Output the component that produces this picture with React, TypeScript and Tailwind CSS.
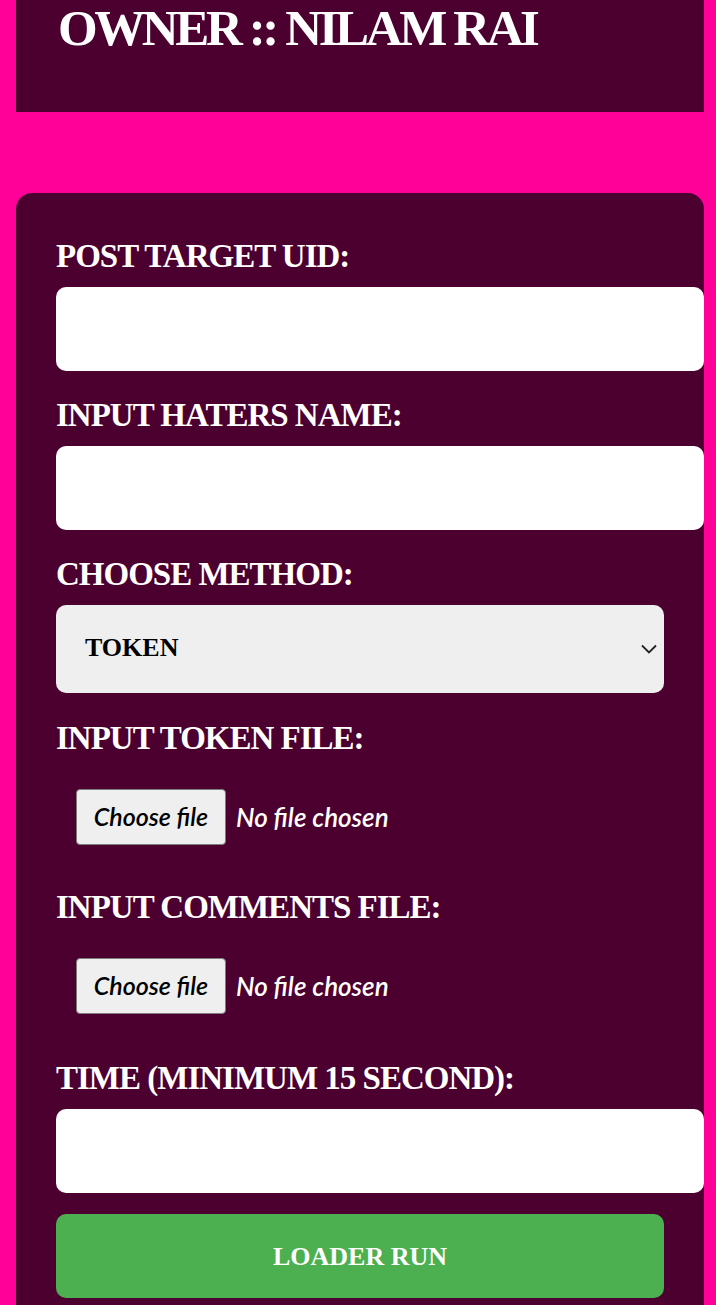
const serif = "font-['Liberation_Serif',serif]";

function Label({ children }: { children: string }) {
	return (
		<label className="mb-[14px] block text-[33px] font-bold leading-[33px] tracking-[-1px] text-white">
			{children}
		</label>
	);
}

function TextField({ last }: { last?: boolean }) {
	return (
		<input
			type="text"
			className={
				last
					? 'mb-[21px] block h-[84px] w-[calc(100%+40px)] rounded-[10px] bg-white px-[20px] text-[24px] text-black outline-none'
					: 'mb-[28px] block h-[84px] w-[calc(100%+40px)] rounded-[10px] bg-white px-[20px] text-[24px] text-black outline-none'
			}
		/>
	);
}

// native file input text says "Choose File", so the control is drawn by hand
function FileField({ spacing }: { spacing: string }) {
	return (
		<label
			className={`${spacing} flex cursor-pointer items-center gap-[10px] p-[20px] font-['Lato',sans-serif] text-[26px] font-semibold italic text-white`}
		>
			<input type="file" className="hidden" />
			<span className="flex h-[56px] w-[150px] items-center justify-center rounded-[4px] border border-[#7d7d7d] bg-[#efefef] text-[25px] text-black">
				Choose file
			</span>
			<span>No file chosen</span>
		</label>
	);
}

export default function App() {
	return (
		<div className={`h-screen overflow-hidden bg-[#ff0099] pl-[16px] pr-[12px] ${serif}`}>
			<div className="h-[112px] bg-[#4b0030] pl-[42px]">
				<h1 className="text-[51px] font-bold leading-[56px] tracking-[-3.4px] text-white">
					OWNER :: NILAM RAI
				</h1>
			</div>

			<form className="mt-[81px] rounded-[16px] bg-[#4b0030] px-[40px] pb-[40px] pt-[47px]">
				<Label>POST TARGET UID:</Label>
				<TextField />

				<Label>INPUT HATERS NAME:</Label>
				<TextField />

				<Label>CHOOSE METHOD:</Label>
				<div className="relative mb-[29px]">
					<select className="block h-[88px] w-full appearance-none rounded-[10px] bg-[#efefef] pl-[29px] pb-[4px] text-[26px] font-bold text-black outline-none">
						<option>TOKEN</option>
						<option>COOKIES</option>
					</select>
					<svg
						className="pointer-events-none absolute right-[7px] top-[39px]"
						width="16"
						height="10"
						viewBox="0 0 16 10"
						fill="none"
					>
						<path d="M1 1.5 L8 8.5 L15 1.5" stroke="#222" strokeWidth="1.8" />
					</svg>
				</div>

				<Label>INPUT TOKEN FILE:</Label>
				<FileField spacing="mb-[26px]" />

				<Label>INPUT COMMENTS FILE:</Label>
				<FileField spacing="mb-[28px]" />

				<Label>TIME (MINIMUM 15 SECOND):</Label>
				<TextField last />

				<button
					type="button"
					className="block h-[84px] w-full rounded-[10px] bg-[#4caf50] text-[26px] font-bold text-white"
				>
					LOADER RUN
				</button>
			</form>
		</div>
	);
}
